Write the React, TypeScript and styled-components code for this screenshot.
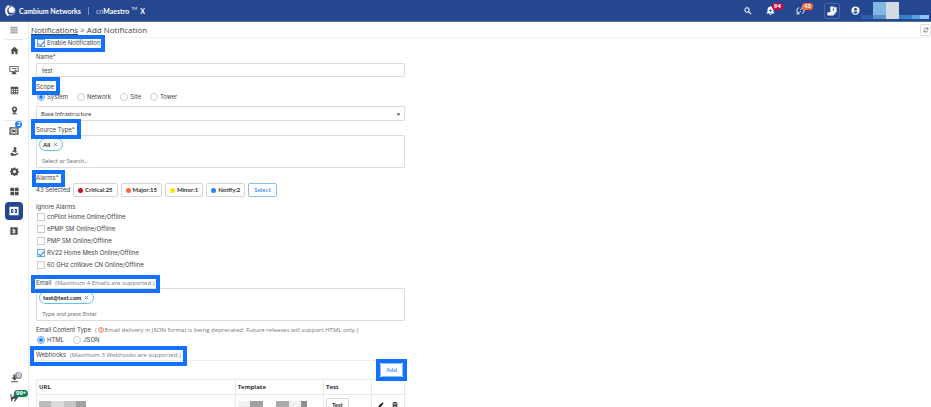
import React from "react";
import styled, { createGlobalStyle, css } from "styled-components";

const Global = createGlobalStyle`
  * { box-sizing: border-box; }
  html, body { margin: 0; height: 100%; overflow: hidden; }
  body, button, input, select { font-family: Inter, "Open Sans", sans-serif; }
  body { background: #fff; color: #444; font-size: 6px; line-height: 10px; }
  svg { display: block; }
`;

const Page = styled.div`
  display: grid;
  grid-template: 22px minmax(0, 1fr) / 29px minmax(0, 1fr);
  height: 100vh;
`;

/* ---------- top bar ---------- */
const TopBar = styled.header`
  grid-column: 1 / -1;
  display: flex;
  align-items: center;
  padding: 0 2px 0 5px;
  background: #24478f;
  border-bottom: 1px solid #5671a8;
  color: #fff;
  font-size: 7px;
`;
const Brand = styled.span`
  margin-left: 3px;
  font-family: Lato, sans-serif;
  font-weight: 700;
`;
const BrandRule = styled.span`
  width: 1px;
  height: 8px;
  margin: 0 7px;
  background: #7d93c0;
`;
const Product = styled.span`
  display: flex;
  font-family: Lato, sans-serif;
  font-weight: 700;
  i { font-style: normal; font-weight: 400; color: #c3cee3; }
  sup { margin: 0 3px 0 2px; font-size: 4px; line-height: 6px; font-weight: 400; }
`;
const Tools = styled.div`
  display: flex;
  align-items: center;
  margin-left: auto;
`;
const ToolButton = styled.button<{ $boxed?: boolean; $gap: number }>`
  position: relative;
  display: grid;
  place-items: center;
  width: 16px;
  height: 16px;
  margin-right: ${(p) => p.$gap}px;
  padding: 0;
  border: 1px solid ${(p) => (p.$boxed ? "#4668a6" : "transparent")};
  border-radius: 2px;
  background: none;
  color: #fff;
`;
const Badge = styled.span<{ $color: string; $left: number; $top: number }>`
  position: absolute;
  left: ${(p) => p.$left}px;
  top: ${(p) => p.$top}px;
  min-width: 7px;
  padding: 0 2px;
  border-radius: 4px;
  background: ${(p) => p.$color};
  color: #fff;
  font-family: "Open Sans", sans-serif;
  font-size: 6px;
  font-weight: 700;
  line-height: 7px;
  text-align: center;
`;

/* ---------- side navigation ---------- */
const Side = styled.nav`
  display: flex;
  flex-direction: column;
  align-items: center;
  border-right: 1px solid #ececec;
  overflow: hidden;
`;
const SideRule = styled.hr`
  flex: none;
  width: 18px;
  height: 1px;
  margin: 0;
  border: 0;
  background: #e6e6e6;
`;
const SideItem = styled.a<{ $active?: boolean }>`
  position: relative;
  flex: none;
  display: grid;
  place-items: center;
  width: 18px;
  height: 18px;
  margin: 1px 0;
  border-radius: 4px;
  color: ${(p) => (p.$active ? "#fff" : "#4d4d4d")};
  background: ${(p) => (p.$active ? "#24478f" : "none")};
`;
const MenuItem = styled(SideItem).attrs({ as: "button" })`
  height: 15px;
  margin: 0 0 2px;
  padding: 0;
  border: 0;
  color: #777;
`;
const SideFoot = styled.div`
  margin-top: auto;
`;

/* ---------- main column ---------- */
const Main = styled.main`
  min-width: 0;
  overflow-x: hidden;
  overflow-y: scroll;
  &::-webkit-scrollbar { width: 2px; }
  &::-webkit-scrollbar-track { margin-top: 16px; }
  &::-webkit-scrollbar-thumb { background: #c9c9c9; }
`;
const TitleBar = styled.div`
  display: flex;
  align-items: center;
  height: 16px;
  padding-left: 2px;
  border-bottom: 1px solid #f5f5f5;
`;
const Title = styled.h1`
  margin: 0;
  font-family: "Open Sans", sans-serif;
  font-size: 8px;
  line-height: 14px;
  font-weight: 400;
  a { color: inherit; }
`;
const Refresh = styled.button`
  display: grid;
  place-items: center;
  width: 11px;
  height: 12px;
  margin-left: auto;
  padding: 0;
  border: 1px solid #ddd;
  border-radius: 2px;
  background: #fff;
  color: #555;
`;
const Form = styled.form`
  width: 42%;
  padding: 0 3px 0 7px;
`;
const Field = styled.div<{ $top?: number }>`
  margin-top: ${(p) => p.$top ?? 4}px;
`;
const captionRow = css`
  display: flex;
  align-items: center;
  gap: 4px;
  width: max-content;
  height: 10px;
`;
const Label = styled.label`
  ${captionRow}
`;
const Caption = styled.span`
  ${captionRow}
`;
const Hint = styled.small`
  display: flex;
  align-items: center;
  gap: 1px;
  color: #777;
  font-family: "Open Sans", sans-serif;
  font-size: 6px;
`;
const Mark = styled.span<{ $inset: string }>`
  position: relative;
  display: block;
  width: max-content;
  &::after {
    content: "";
    position: absolute;
    z-index: 1;
    inset: ${(p) => p.$inset};
    border: 4px solid #1271ff;
    pointer-events: none;
  }
`;
const boxed = css`
  width: 100%;
  border: 1px solid #ddd;
  border-radius: 1px;
  background: #fff;
  color: #444;
`;
const TextInput = styled.input`
  ${boxed}
  display: block;
  height: 14px;
  margin-top: 1px;
  padding: 0 5px;
  font-size: 6px;
`;
const SelectWrap = styled.div`
  position: relative;
  margin-top: 4px;
  svg { position: absolute; right: 4px; top: 6px; pointer-events: none; }
`;
const Select = styled.select`
  ${boxed}
  display: block;
  appearance: none;
  height: 15px;
  padding: 0 4px;
  font-family: Lato, sans-serif;
  font-size: 6px;
`;
const TagBox = styled.div`
  ${boxed}
  height: 33px;
  padding: 2px;
`;
const Tag = styled.span`
  display: flex;
  align-items: center;
  gap: 2px;
  width: max-content;
  height: 13px;
  padding: 0 3px;
  border: 1px solid #5ec4ea;
  border-radius: 7px;
  color: #222;
  font-family: Lato, sans-serif;
  font-size: 6px;
  font-weight: 700;
  button { display: grid; padding: 1px; border: 0; background: none; color: #444; }
`;
const TagInput = styled.input`
  display: block;
  width: 100%;
  height: 14px;
  margin-top: 2px;
  padding: 0 3px;
  border: 0;
  outline: 0;
  background: none;
  font-family: Lato, sans-serif;
  font-size: 6px;
  &::placeholder { color: #777; }
`;
const Options = styled.div`
  display: flex;
  gap: 8px;
`;
const CheckList = styled.div`
  display: grid;
  gap: 2px;
`;
const Choice = styled.label`
  display: flex;
  align-items: center;
  gap: 2px;
  width: max-content;
  height: 10px;
`;
const Radio = styled.input.attrs({ type: "radio" })`
  appearance: none;
  width: 8px;
  height: 8px;
  margin: 0 0 0 1px;
  border: 1px solid #ccc;
  border-radius: 50%;
  background: #fff;
  &:checked {
    border-color: #6aa9f5;
    background: radial-gradient(circle, #1677ff 1px, #fff 3px);
  }
`;
const Check = styled.input.attrs({ type: "checkbox" })`
  appearance: none;
  display: grid;
  place-items: center;
  width: 8px;
  height: 8px;
  margin: 0 0 0 1px;
  border: 1px solid #ccc;
  background: #fff;
  &:checked { border-color: #6aa9f5; }
  &:checked::before {
    content: "";
    width: 3px;
    height: 5px;
    margin-bottom: 1px;
    border: solid #2f80ed;
    border-width: 0 1px 1px 0;
    transform: rotate(40deg);
  }
`;
const AlarmRow = styled.div`
  display: flex;
  align-items: center;
  gap: 3px;
  height: 14px;
`;
const Button = styled.button<{ $tone?: "blue" }>`
  display: flex;
  align-items: center;
  justify-content: center;
  gap: 2px;
  height: 14px;
  padding: 0 4px;
  border: 1px solid ${(p) => (p.$tone ? "#8ebcf8" : "#d5d5d5")};
  border-radius: 2px;
  background: #fff;
  color: ${(p) => (p.$tone ? "#4a96f5" : "#333")};
  font-family: Lato, sans-serif;
  font-size: 6px;
  line-height: 8px;
  font-weight: 700;
  white-space: nowrap;
`;
const WideButton = styled(Button)`
  padding: 0 5px;
`;
const Dot = styled.span<{ $color: string }>`
  width: 5px;
  height: 5px;
  border-radius: 50%;
  background: ${(p) => p.$color};
`;
const WarnBox = styled.span`
  color: #ff6b35;
`;
const HookPanel = styled.section`
  border-top: 1px solid #ececec;
`;
const HookTools = styled.div`
  display: flex;
  justify-content: flex-end;
  padding: 2px 2px 2px 0;
  height: 18px;
`;
const HookTable = styled.table`
  width: 100%;
  table-layout: fixed;
  border-collapse: collapse;
  th, td {
    height: 15px;
    padding: 0 2px;
    border: 1px solid #e8e8e8;
    text-align: left;
  }
  td { height: 20px; }
  th {
    color: #333;
    font-family: "Open Sans", sans-serif;
    font-weight: 700;
  }
`;
const Col = styled.col<{ $w: number }>`
  width: ${(p) => p.$w}%;
`;
const RowActions = styled.div`
  display: flex;
  justify-content: space-around;
  button { padding: 0; border: 0; background: none; color: #222; }
`;

type IconProps = { d: string; size?: number; stroke?: boolean };
const Icon = ({ d, size = 9, stroke }: IconProps) => (
  <svg width={size} height={size} viewBox="0 0 24 24" aria-hidden="true"
    fill={stroke ? "none" : "currentColor"} fillRule="evenodd"
    stroke={stroke ? "currentColor" : "none"} strokeWidth={2.6}>
    <path d={d} />
  </svg>
);

const P = {
  menu: "M1 4h22M1 9.500h22M1 15h22M1 20.500h22",
  home: "M12 2 1 12h3v10h6v-7h4v7h6V12h3z",
  monitor: "M1 3h22v14h-7v3h2v2H6v-2h2v-3H1zM3 5v10h18V5zM6 7h12v2H6zM14 11h4v3h-4z",
  grid: "M2 2h20v20H2zM4 8v3h4V8zM10 8v3h4V8zM16 8v3h4V8zM4 13v3h4v-3zM10 13v3h4v-3zM16 13v3h4v-3zM4 18v2h4v-2zM10 18v2h4v-2zM16 18v2h4v-2z",
  pin: "M12 1a7 7 0 0 1 7 7c0 5-5 10-6 11h5v3H6v-3h5C10 18 5 13 5 8a7 7 0 0 1 7-7zM12 5a3 3 0 1 0 0 6 3 3 0 0 0 0-6z",
  device: "M1 3h22v18H1zM4 6v12h16V6zM6 8h3v2H8v4h1v2H6zM15 8h3v8h-3v-2h1v-4h-1zM12 9a3 3 0 1 1 0 6 3 3 0 0 1 0-6z",
  panel: "M1 2h22v20H1zM5 7v10h5v-3H8v-4h2V7zM14 7v3h2v4h-2v3h5V7zM11 11h2v2h-2z",
  hand: "M13 0a4 4 0 0 1 3 7l2 6-4 3-2-4-4 2-2-2 5-5a4 4 0 0 1 2-7zM2 15l5 1 6 3 8-4 2 2-9 6H2z",
  gear: "M10 1h4l.6 3 2.400 1 2.700-1.600 2.700 2.800L20.800 9l.8 2 2.400.5v3l-3 .8-1 2 1.500 2.700-2.800 2.500-2.700-1.500-2 .8-.5 2.200h-3.500L9 21l-2-.8L4.400 22l-2.700-2.800L3.200 17l-1-2.200L0 14v-3.500l2.500-.7 1-2.300L2 5l2.500-2.500L7 4l2.300-.8zM12 8a4 4 0 1 0 0 8.500A4 4 0 0 0 12 8z",
  apps: "M1 2h10v9H1zM13 2h10v9H13zM1 13h10v9H1zM13 13h10v9H13z",
  doc: "M1 1h22v22H1zM8 5v6h5v2H8v6h8v-3h-4v-2h4V8h-4V5z",
  download: "M9 1h6v8h5l-8 8-8-8h5zM3 19h18v3H3z",
  flag: "M1 3l3-1v9l6-3V3l13 7-4 5-6 8-2-1 3-8-8 3v5H3z",
  search: "M9 1a8 8 0 0 1 6.500 12.600l7 7-2.200 2.200-7-7A8 8 0 1 1 9 1zM9 4a5 5 0 1 0 0 10A5 5 0 0 0 9 4z",
  bell: "M12 0a2 2 0 0 1 2 2c4 1 6 4 6 8v6l3 3v1H1v-1l3-3v-6c0-4 2-7 6-8a2 2 0 0 1 2-2zM9 22h6a3 3 0 0 1-6 0zM11 8v3H8v2h3v3h2v-3h3v-2h-3V8z",
  sync: "M8 4C1 7 1 16 6 20M1 21h7v-6M16 20c7-3 7-12 2-16M23 3h-7v6M12 8v2M12 14v2",
  user: "M12 1a11 11 0 1 1 0 22 11 11 0 0 1 0-22zM12 4.500a4 4 0 1 0 0 8 4 4 0 0 0 0-8zM12 14.500c-3 0-6 1.500-6 3 2.500 4 9.500 4 12 0 0-1.500-3-3-6-3z",
  folder: "M8 1h7l2 2h6v11l-5 4h-5l-5-3zM14 6v5h3V6zM1 15h7l6 3 8-2-7 7H1z",
  refresh: "M4 10a8 8 0 0 1 15-2M20 2v7h-6M20 14a8 8 0 0 1-15 2M4 22v-7h6",
  cross: "M4 4l16 16M20 4 4 20",
  pencil: "M17 1l6 6-3 3-6-6zM13 5l6 6L8 22H2v-6z",
  trash: "M8 0h8v2h6v3H2V2h6zM3 7h18v17H3zM7 10v2h10v-2zM7 14v7h3v-7zM14 14v7h3v-7z",
  caret: "M3 7h18l-9 11z",
  warn: "M12 1a11 11 0 1 1 0 22 11 11 0 0 1 0-22zM12 4a8 8 0 1 0 0 16 8 8 0 0 0 0-16zM10 6h4v7h-4zM10 15h4v3h-4z",
};

const Logo = () => (
  <svg width="11" height="11" viewBox="0 0 22 22" aria-hidden="true">
    <circle cx="11" cy="11" r="9" fill="none" stroke="#b9c8e4" strokeWidth="2" />
    <path d="M8 2C1 5 0 16 7 21" fill="none" stroke="#fff" strokeWidth="4" />
    <circle cx="13" cy="10" r="6" fill="#fff" />
  </svg>
);

const AccountMosaic = () => (
  <svg width="68" height="20" viewBox="0 0 68 20" aria-label="Account name" role="img">
    <path fill="#2a60aa" d="M0 14h12v4H0z" />
    <path fill="#7fb9e2" d="M12 1h13v13H12z" />
    <path fill="#5a8fc9" d="M12 14h13v4H12z" />
    <path fill="#d5d9e2" d="M25 1h13v17H25z" />
    <path fill="#3383cc" d="M38 14h13v4H38z" />
    <path fill="#54a4e2" d="M51 14h8v4h-8z" />
    <path fill="#8bc5fb" d="M59 14h9v4h-9z" />
  </svg>
);

const UrlMosaic = () => (
  <svg width="48" height="7" viewBox="0 0 48 7" role="img" aria-label="Webhook URL">
    <path fill="#bbb" d="M0 0h12v6H0z" />
    <path fill="#dadada" d="M12 0h13v6H12z" />
    <path fill="#c6c6c6" d="M25 0h12v6H25z" />
    <path fill="#a2a2a2" d="M37 0h10v6H37z" />
  </svg>
);

const TemplateMosaic = () => (
  <svg width="69" height="7" viewBox="0 0 69 7" role="img" aria-label="Template name">
    <path fill="#f0f0f0" d="M0 0h12v7H0zM51 0h12v7H51z" />
    <path fill="#a0a0a0" d="M12 0h13v7H12z" />
    <path fill="#aaa" d="M38 0h13v7H38z" />
    <path fill="#8f8f8f" d="M63 0h6v7h-6z" />
  </svg>
);

const alarms = [
  ["Critical:25", "#c8102e"],
  ["Major:15", "#ff6b35"],
  ["Minor:1", "#ffe100"],
  ["Notify:2", "#2684ff"],
];
const ignored = [
  "cnPilot Home Online/Offline",
  "ePMP SM Online/Offline",
  "PMP SM Online/Offline",
  "RV22 Home Mesh Online/Offline",
  "60 GHz cnWave CN Online/Offline",
];

export default function App() {
  return (
    <Page>
      <Global />
      <TopBar>
        <Logo />
        <Brand>Cambium Networks</Brand>
        <BrandRule />
        <Product><i>cn</i>Maestro<sup>TM</sup>X</Product>
        <Tools>
          <ToolButton $gap={6} aria-label="Search"><Icon d={P.search} size={8} /></ToolButton>
          <ToolButton $gap={14} aria-label="Alarms">
            <Icon d={P.bell} size={9} />
            <Badge $color="#d3093b" $left={9} $top={-1}>94</Badge>
          </ToolButton>
          <ToolButton $gap={16} aria-label="Sync jobs">
            <Icon d={P.sync} size={9} stroke />
            <Badge $color="#ff6b35" $left={9} $top={-1}>43</Badge>
          </ToolButton>
          <ToolButton $gap={7} $boxed aria-label="Managed services"><Icon d={P.folder} size={10} /></ToolButton>
          <ToolButton $gap={-2} aria-label="Account"><Icon d={P.user} size={9} /></ToolButton>
          <AccountMosaic />
        </Tools>
      </TopBar>

      <Side>
        <MenuItem aria-label="Menu"><Icon d={P.menu} stroke size={8} /></MenuItem>
        <SideRule />
        <SideItem href="#home" aria-label="Home"><Icon d={P.home} /></SideItem>
        <SideItem href="#monitor" aria-label="Monitor"><Icon d={P.monitor} size={10} /></SideItem>
        <SideItem href="#inventory" aria-label="Inventory"><Icon d={P.grid} /></SideItem>
        <SideItem href="#map" aria-label="Map"><Icon d={P.pin} /></SideItem>
        <SideRule />
        <SideItem href="#onboard" aria-label="Onboard">
          <Icon d={P.device} size={10} />
          <Badge $color="#1f7cf0" $left={10} $top={-1}>2</Badge>
        </SideItem>
        <SideItem href="#services" aria-label="Services"><Icon d={P.hand} /></SideItem>
        <SideItem href="#settings" aria-label="Settings"><Icon d={P.gear} /></SideItem>
        <SideItem href="#apps" aria-label="Applications"><Icon d={P.apps} /></SideItem>
        <SideItem href="#admin" aria-label="Administration" $active><Icon d={P.panel} size={10} /></SideItem>
        <SideItem href="#docs" aria-label="Documents"><Icon d={P.doc} size={8} /></SideItem>
        <SideFoot>
          <SideItem href="#downloads" aria-label="Downloads">
            <Icon d={P.download} />
            <Badge $color="#8d97a5" $left={10} $top={3}>0</Badge>
          </SideItem>
          <SideItem href="#announcements" aria-label="Announcements">
            <Icon d={P.flag} />
            <Badge $color="#15845a" $left={9} $top={2}>99+</Badge>
          </SideItem>
        </SideFoot>
      </Side>

      <Main>
        <TitleBar>
          <Title><a href="#notifications">Notifications</a> &gt; Add Notification</Title>
          <Refresh aria-label="Refresh"><Icon d={P.refresh} stroke size={6} /></Refresh>
        </TitleBar>
        <Form onSubmit={(e) => e.preventDefault()}>
          <Mark $inset="-3px -5px -4px -5px">
            <Choice><Check defaultChecked />Enable Notification</Choice>
          </Mark>

          <Field>
            <Label htmlFor="name">Name*</Label>
            <TextInput id="name" defaultValue="test" />
          </Field>

          <Field $top={5}>
            <Mark $inset="-5px -6px -3px -4px"><Caption>Scope</Caption></Mark>
            <Options role="radiogroup" aria-label="Scope">
              {["System", "Network", "Site", "Tower"].map((s, i) => (
                <Choice key={s}><Radio name="scope" defaultChecked={i === 0} />{s}</Choice>
              ))}
            </Options>
            <SelectWrap>
              <Select aria-label="Infrastructure"><option>Base Infrastructure</option></Select>
              <Icon d={P.caret} size={5} />
            </SelectWrap>
          </Field>

          <Field>
            <Mark $inset="-6px -6px -4px -5px"><Label htmlFor="source">Source Type*</Label></Mark>
            <TagBox>
              <Tag>All<button type="button" aria-label="Remove All"><Icon d={P.cross} stroke size={5} /></button></Tag>
              <TagInput id="source" placeholder="Select or Search..." />
            </TagBox>
          </Field>

          <Field $top={5}>
            <Mark $inset="-3px -6px -4px -4px"><Caption>Alarms*</Caption></Mark>
            <AlarmRow>
              <span>43 Selected</span>
              {alarms.map(([text, color]) => (
                <Button type="button" key={text}><Dot $color={color} />{text}</Button>
              ))}
              <WideButton type="button" $tone="blue">Select</WideButton>
            </AlarmRow>
          </Field>

          <Field $top={5}>
            <Caption>Ignore Alarms</Caption>
            <CheckList>
              {ignored.map((text, i) => (
                <Choice key={text}><Check defaultChecked={i === 3} />{text}</Choice>
              ))}
            </CheckList>
          </Field>

          <Field $top={8}>
            <Mark $inset="-3px -6px -5px -5px">
              <Label htmlFor="email">Email<Hint>(Maximum 4 Emails are supported.)</Hint></Label>
            </Mark>
            <TagBox>
              <Tag>test@test.com<button type="button" aria-label="Remove test@test.com"><Icon d={P.cross} stroke size={5} /></button></Tag>
              <TagInput id="email" placeholder="Type and press Enter" />
            </TagBox>
          </Field>

          <Field>
            <Caption>
              Email Content Type
              <Hint>
                (<WarnBox><Icon d={P.warn} size={6} /></WarnBox>
                Email delivery in JSON format is being deprecated. Future releases will support HTML only.)
              </Hint>
            </Caption>
            <Options role="radiogroup" aria-label="Email Content Type">
              <Choice><Radio name="content" defaultChecked />HTML</Choice>
              <Choice><Radio name="content" />JSON</Choice>
            </Options>
          </Field>

          <Field $top={5}>
            <Mark $inset="-4px -6px -6px -6px">
              <Caption>Webhooks<Hint>(Maximum 3 Webhooks are supported.)</Hint></Caption>
            </Mark>
            <HookPanel>
              <HookTools>
                <Mark $inset="-4px"><WideButton type="button" $tone="blue">Add</WideButton></Mark>
              </HookTools>
              <HookTable>
                <colgroup><Col $w={54} /><Col $w={24} /><Col $w={13} /><Col $w={9} /></colgroup>
                <thead>
                  <tr><th>URL</th><th>Template</th><th>Test</th><th aria-label="Actions" /></tr>
                </thead>
                <tbody>
                  <tr>
                    <td><UrlMosaic /></td>
                    <td><TemplateMosaic /></td>
                    <td><WideButton type="button">Test</WideButton></td>
                    <td>
                      <RowActions>
                        <button type="button" aria-label="Edit"><Icon d={P.pencil} size={6} /></button>
                        <button type="button" aria-label="Delete"><Icon d={P.trash} size={6} /></button>
                      </RowActions>
                    </td>
                  </tr>
                </tbody>
              </HookTable>
            </HookPanel>
          </Field>
        </Form>
      </Main>
    </Page>
  );
}
